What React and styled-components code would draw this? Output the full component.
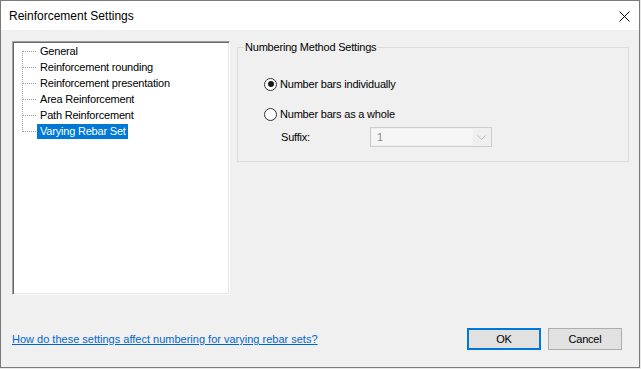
import React, { useState } from 'react';
import styled, { createGlobalStyle } from 'styled-components';

const GlobalStyle = createGlobalStyle`
  body {
    margin: 0;
    background: #e9e9e9;
    font-family: "Liberation Sans", Arial, sans-serif;
  }
`;

const Window = styled.div`
  width: 640px;
  height: 368px;
  box-sizing: border-box;
  border: 1px solid #7a7a7a;
  background: #f0f0f0;
  display: flex;
  flex-direction: column;
  font-size: 11px;
  letter-spacing: -0.2px;
  color: #000;
`;

const TitleBar = styled.div`
  height: 29px;
  flex: none;
  background: #fff;
  display: flex;
  align-items: center;
  justify-content: space-between;
  padding: 1px 9px 0 8px;
  box-sizing: border-box;
  font-size: 12px;
  letter-spacing: 0;
`;

const CloseButton = styled.button`
  border: none;
  background: none;
  padding: 0;
  width: 12px;
  height: 12px;
  display: flex;
  align-items: center;
  justify-content: center;
`;

const Content = styled.div`
  flex: 1;
  display: flex;
  flex-direction: column;
  padding: 11px 10px 17px 11px;
`;

const TopRow = styled.div`
  display: flex;
  align-items: flex-start;
  gap: 7px;
`;

const Tree = styled.ul`
  width: 218px;
  height: 254px;
  box-sizing: border-box;
  margin: 0;
  list-style: none;
  background: #fff;
  border: 1px solid;
  border-color: #a0a0a0 #fff #fff #a0a0a0;
  box-shadow: inset 1px 1px #696969, inset -1px -1px #e3e3e3;
  padding: 1px 0 0 9px;
`;

const TreeRow = styled.li`
  height: 16px;
  display: flex;
  align-items: center;
`;

const TreeLabel = styled.span`
  height: 15px;
  line-height: 15px;
  padding: 0 2px 0 3px;
  background: ${(p) => (p.$selected ? '#0078d7' : 'transparent')};
  color: ${(p) => (p.$selected ? '#fff' : '#000')};
  white-space: nowrap;
`;

const Connector = ({ first, last }) => (
  <svg width="15" height="16" style={{ flex: 'none' }}>
    <line
      x1="0.5"
      y1={first ? 8 : 0}
      x2="0.5"
      y2={last ? 9 : 16}
      stroke="#a0a0a0"
      strokeDasharray="1 1"
    />
    <line x1="1" y1="8.5" x2="15" y2="8.5" stroke="#a0a0a0" strokeDasharray="1 1" />
  </svg>
);

const GroupBox = styled.fieldset`
  flex: 1;
  margin: 0;
  min-width: 0;
  height: 121px;
  box-sizing: border-box;
  border: 1px solid #dcdcdc;
  padding: 22px 10px 0 6px;
`;

const Legend = styled.legend`
  margin: 0;
  padding: 0 1px;
  line-height: 13px;
`;

const GroupBody = styled.div`
  padding-left: 20px;
`;

const RadioRow = styled.label`
  display: flex;
  align-items: center;
  gap: 3px;
  height: 16px;
  margin-bottom: ${(p) => p.$gap || 0}px;
`;

const RadioCircle = styled.span`
  width: 13px;
  height: 13px;
  box-sizing: border-box;
  border-radius: 50%;
  border: 1px solid #333;
  background: #fff;
  display: flex;
  align-items: center;
  justify-content: center;
  &::after {
    content: '';
    width: 6px;
    height: 6px;
    border-radius: 50%;
    background: ${(p) => (p.$checked ? '#1a1a1a' : 'transparent')};
  }
`;

const SuffixRow = styled.div`
  display: flex;
  align-items: center;
  margin: 5px 0 0 17px;
`;

const SuffixLabel = styled.span`
  width: 89px;
`;

const Combo = styled.div`
  width: 122px;
  height: 20px;
  box-sizing: border-box;
  border: 1px solid #cccccc;
  background: #efefef;
  display: flex;
  padding: 1px;
`;

const ComboValue = styled.div`
  width: 101px;
  background: #f6f6f6;
  color: #8a8a8a;
  padding-left: 5px;
  line-height: 16px;
  box-sizing: border-box;
`;

const ComboArrow = styled.div`
  flex: 1;
  display: flex;
  align-items: center;
  justify-content: center;
`;

const BottomRow = styled.div`
  margin-top: auto;
  display: flex;
  align-items: center;
  padding-right: 7px;
`;

const HelpLink = styled.a`
  color: #0066cc;
  text-decoration: underline;
  letter-spacing: 0;
  cursor: pointer;
`;

const Buttons = styled.div`
  margin-left: auto;
  display: flex;
  gap: 7px;
`;

const Button = styled.button`
  width: 74px;
  height: 22px;
  box-sizing: border-box;
  background: #e1e1e1;
  border: ${(p) => (p.$default ? '2px solid #0078d7' : '1px solid #adadad')};
  font: inherit;
  letter-spacing: inherit;
  color: #000;
  padding: 0;
`;

const items = [
  'General',
  'Reinforcement rounding',
  'Reinforcement presentation',
  'Area Reinforcement',
  'Path Reinforcement',
  'Varying Rebar Set',
];

export default function App() {
  const [selected, setSelected] = useState(5);
  const [mode, setMode] = useState('individual');

  return (
    <>
      <GlobalStyle />
      <Window>
        <TitleBar>
          <span>Reinforcement Settings</span>
          <CloseButton aria-label="Close">
            <svg width="11" height="11" viewBox="0 0 11 11">
              <path d="M0.5 0.5L10.5 10.5M10.5 0.5L0.5 10.5" stroke="#000" strokeWidth="1" />
            </svg>
          </CloseButton>
        </TitleBar>
        <Content>
          <TopRow>
            <Tree>
              {items.map((item, i) => (
                <TreeRow key={item} onClick={() => setSelected(i)}>
                  <Connector first={i === 0} last={i === items.length - 1} />
                  <TreeLabel $selected={selected === i}>{item}</TreeLabel>
                </TreeRow>
              ))}
            </Tree>
            <GroupBox>
              <Legend>Numbering Method Settings</Legend>
              <GroupBody>
                <RadioRow $gap={14} onClick={() => setMode('individual')}>
                  <RadioCircle $checked={mode === 'individual'} />
                  Number bars individually
                </RadioRow>
                <RadioRow onClick={() => setMode('whole')}>
                  <RadioCircle $checked={mode === 'whole'} />
                  Number bars as a whole
                </RadioRow>
                <SuffixRow>
                  <SuffixLabel>Suffix:</SuffixLabel>
                  <Combo>
                    <ComboValue>1</ComboValue>
                    <ComboArrow>
                      <svg width="9" height="5" viewBox="0 0 9 5">
                        <path d="M0.5 0.5L4.5 4.5L8.5 0.5" fill="none" stroke="#bdbdbd" />
                      </svg>
                    </ComboArrow>
                  </Combo>
                </SuffixRow>
              </GroupBody>
            </GroupBox>
          </TopRow>
          <BottomRow>
            <HelpLink>How do these settings affect numbering for varying rebar sets?</HelpLink>
            <Buttons>
              <Button $default>OK</Button>
              <Button>Cancel</Button>
            </Buttons>
          </BottomRow>
        </Content>
      </Window>
    </>
  );
}
